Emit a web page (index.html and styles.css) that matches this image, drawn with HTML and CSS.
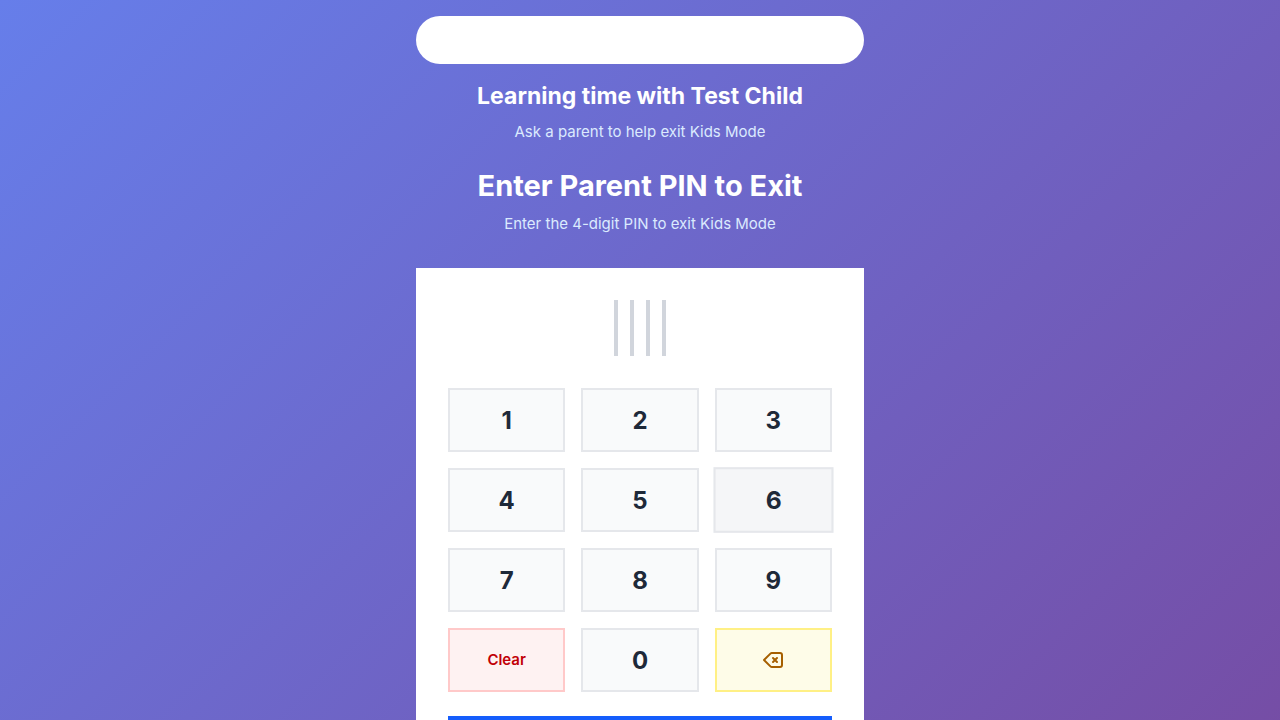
FILE: index.html
```html
<!DOCTYPE html>
<html lang="en">
<head>
<meta charset="utf-8">
<title>Kids Mode</title>
<link rel="stylesheet" href="styles.css">
</head>
<body>
<main class="panel">
  <div class="banner"></div>
  <header class="intro">
    <h2 class="intro-title">Learning time with Test Child</h2>
    <p class="note">Ask a parent to help exit Kids Mode</p>
  </header>
  <header class="heading">
    <h1 class="title">Enter Parent PIN to Exit</h1>
    <p class="note">Enter the 4-digit PIN to exit Kids Mode</p>
  </header>
  <section class="card">
    <div class="pin"><span class="slot"></span><span class="slot"></span><span class="slot"></span><span class="slot"></span></div>
    <div class="keypad">
      <button class="key" type="button">1</button>
      <button class="key" type="button">2</button>
      <button class="key" type="button">3</button>
      <button class="key" type="button">4</button>
      <button class="key" type="button">5</button>
      <button class="key key-active" type="button">6</button>
      <button class="key" type="button">7</button>
      <button class="key" type="button">8</button>
      <button class="key" type="button">9</button>
      <button class="key key-clear" type="button">Clear</button>
      <button class="key" type="button">0</button>
      <button class="key key-delete" type="button" aria-label="Delete">
        <svg class="icon" viewBox="0 0 24 24" fill="none" stroke="currentColor" stroke-width="2" stroke-linecap="round" stroke-linejoin="round"><path d="M12 14l2-2m0 0l2-2m-2 2l-2-2m2 2l2 2M3 12l6.414 6.414a2 2 0 001.414.586H19a2 2 0 002-2V7a2 2 0 00-2-2h-8.172a2 2 0 00-1.414.586L3 12z"/></svg>
      </button>
    </div>
    <button class="submit" type="button" aria-label="Submit PIN"></button>
  </section>
</main>
</body>
</html>
```

FILE: styles.css
```css
* { box-sizing: border-box; }
body {
  min-height: 100vh;
  margin: 0;
  font-family: Inter, sans-serif;
  background: linear-gradient(135deg, #667eea 0%, #764ba2 100%);
}
h1, h2, p { margin: 0; }
.panel { max-width: 448px; margin: 0 auto; padding: 16px 0; }
.banner { height: 48px; border-radius: 24px; background: #fff; }
.intro, .heading { text-align: center; color: #fff; }
.intro { padding-top: 16px; }
.intro-title { font-size: 23px; line-height: 32px; font-weight: 700; margin-bottom: 8px; }
.heading { padding-top: 24px; }
.title { font-size: 29px; line-height: 36px; font-weight: 700; margin-bottom: 8px; }
.note { font-size: 15px; line-height: 24px; color: #dbeafe; }
.card { margin-top: 32px; padding: 32px; background: #fff; }
.pin { display: flex; justify-content: center; gap: 12px; margin-bottom: 32px; }
.slot { width: 4px; height: 56px; background: #d1d5dc; }
.keypad { display: grid; grid-template-columns: repeat(3, 1fr); gap: 16px; }
.key {
  display: flex; align-items: center; justify-content: center;
  height: 64px; padding: 2px 0 0;
  border: 2px solid #e5e7eb; background: #f9fafb; color: #1e2939;
  font: 700 24px/32px Inter, sans-serif;
}
.key-active { background: #f5f6f8; transform: scale(1.025); }
.key-clear { padding: 0; background: #fef2f2; border-color: #ffc9c9; color: #c10007; font-size: 15px; font-weight: 600; }
.key-delete { padding: 0; background: #fefce8; border-color: #fff085; color: #a65f00; }
.icon { width: 24px; height: 24px; }
.submit { display: block; width: 100%; height: 56px; margin-top: 24px; border: 0; background: #155dfc; }
```
